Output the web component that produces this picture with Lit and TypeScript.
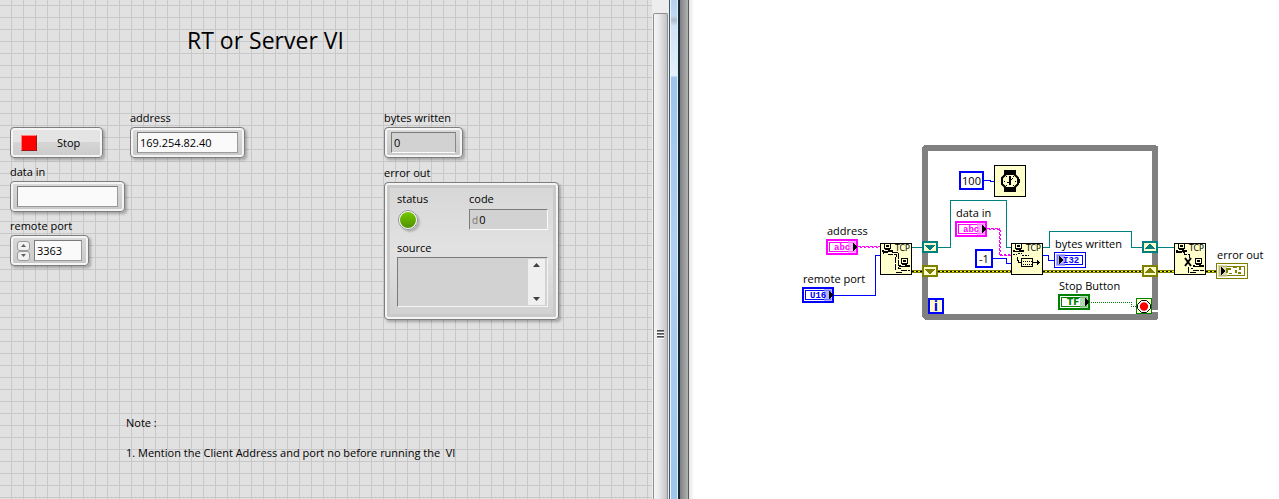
import { LitElement, html, svg, css } from "lit";
import { customElement } from "lit/decorators.js";

const BLUE = "#0000ff";
const PINK = "#ff00ff";
const TEAL = "#008080";
const OLIVE = "#808000";
const GREEN = "#008000";
const CREAM = "#ffffcc";

/* ---------- front panel ---------- */

@customElement("front-panel")
export class FrontPanel extends LitElement {
  static styles = css`
    :host {
      display: block;
      box-sizing: border-box;
      min-width: 0;
      overflow: hidden;
      padding: 24px 0 24px 10px;
      background-color: #e1e1e1;
      background-image: linear-gradient(to right, transparent 11px, #c8c8c8 11px),
        linear-gradient(to bottom, transparent 11px, #c8c8c8 11px);
      background-size: 12px 12px;
      background-position: 0 0, 0 -6px;
      color: #000;
    }
    h1 {
      margin: 0 0 0 177px;
      font-size: 23px;
      line-height: 32px;
      font-weight: 400;
      white-space: nowrap;
    }
    .columns {
      display: grid;
      grid-template-columns: 120px 254px 176px;
      align-items: start;
      margin-top: 53px;
    }
    .column { display: grid; justify-items: start; }
    .first { padding-top: 18px; }
    .label { display: block; line-height: 18px; white-space: nowrap; }
    .first .label { margin-top: 5px; }
    .frame {
      box-sizing: border-box;
      border: 1px solid #7e7e7e;
      border-radius: 4px;
      background: linear-gradient(#dadada, #c8c8c8);
      box-shadow: inset 0 0 0 2px #f4f4f4, 2px 2px 3px rgba(0, 0, 0, 0.28);
    }
    .box {
      display: flex;
      align-items: center;
      gap: 4px;
      width: 115px;
      height: 31px;
      padding: 0 6px;
    }
    .port, .written { width: 79px; }
    .field {
      box-sizing: border-box;
      flex: 1;
      min-width: 0;
      width: 100%;
      height: 21px;
      margin: 0;
      padding: 0 2px;
      border: 1px solid #7b7b7b;
      border-right-color: #fafafa;
      border-bottom-color: #fafafa;
      border-radius: 0;
      outline: none;
      background: #fafafa;
      font: inherit;
      color: #000;
    }
    .editable .field { border-right-color: #9a9a9a; border-bottom-color: #9a9a9a; }
    .field.gray { background: #d2d2d2; }
    .written .field { border-right-color: #8a8a8a; }
    .stop {
      display: flex;
      align-items: center;
      gap: 20px;
      width: 93px;
      height: 31px;
      padding: 0 10px;
      background: linear-gradient(#e4e4e4 50%, #d5d5d5 50%, #cbcbcb);
      font: inherit;
      color: #000;
    }
    .lamp {
      box-sizing: border-box;
      width: 16px;
      height: 16px;
      border: 1px solid #9c1414;
      border-top-color: #ff8080;
      border-left-color: #ff8080;
      background: #f00;
    }
    .spin { display: grid; width: 13px; height: 20px; }
    .spin button {
      display: grid;
      place-items: center;
      padding: 0;
      border: 1px solid #9b9b9b;
      border-radius: 3px;
      background: #f1f1f1;
    }
    .arrow { display: block; fill: #404040; }
    .spin .arrow { width: 5px; height: 3px; fill: #606060; }
    .cluster {
      display: grid;
      grid-template-columns: 72px 79px;
      width: 175px;
      height: 138px;
      padding: 7px 0 0 12px;
      align-content: start;
      background: linear-gradient(#d6d6d6, #e2e2e2 50%, #d0d0d0);
      box-shadow: inset 0 0 0 2px #f4f4f4, inset 0 0 0 5px #cacaca, 2px 2px 3px rgba(0, 0, 0, 0.28);
    }
    .error { line-height: 18px; margin-top: 6px; }
    .led {
      box-sizing: border-box;
      width: 20px;
      height: 20px;
      margin: 2px 0 0 1px;
      border: 2px solid #fff;
      border-radius: 50%;
      outline: 1px solid #8c8c8c;
      outline-offset: -1px;
      background: linear-gradient(#74c800, #4f9000);
      box-shadow: 2px 2px 2px rgba(0, 0, 0, 0.2);
    }
    .code { display: flex; align-items: center; margin-top: 1px; }
    .radix { font-size: 10px; color: #777; }
    .code input {
      flex: 1;
      min-width: 0;
      padding: 0 1px;
      border: 0;
      outline: none;
      background: none;
      font: inherit;
    }
    .source-label { grid-column: 1 / -1; margin-top: 9px; }
    .source {
      grid-column: 1 / -1;
      display: flex;
      box-sizing: border-box;
      height: 50px;
      padding: 1px 2px 1px 0;
      border: 1px solid #7b7b7b;
      border-right-color: #f4f4f4;
      border-bottom-color: #f4f4f4;
      background: #d2d2d2;
    }
    .source textarea {
      flex: 1;
      min-width: 0;
      border: 0;
      padding: 2px;
      resize: none;
      overflow: hidden;
      outline: none;
      background: none;
      font: inherit;
    }
    .bar {
      display: flex;
      flex-direction: column;
      justify-content: space-between;
      width: 17px;
      background: #efefef;
    }
    .bar button {
      display: grid;
      place-items: center;
      height: 12px;
      padding: 0;
      border: 0;
      background: none;
    }
    .notes { margin: 88px 0 0 116px; line-height: 30px; }
    .notes p { margin: 0; white-space: pre; }
  `;

  private arrow(up: boolean) {
    return html`<svg class="arrow" width="7" height="4" viewBox="0 0 7 4" aria-hidden="true">
      ${up ? svg`<path d="M3.5 0L7 4H0z"/>` : svg`<path d="M0 0H7L3.5 4z"/>`}
    </svg>`;
  }

  render() {
    return html`
      <h1>RT or Server VI</h1>
      <div class="columns">
        <div class="column first">
          <button class="frame stop"><span class="lamp"></span>Stop</button>
          <label class="label" for="data">data in</label>
          <div class="frame box editable"><input class="field" id="data" type="text" /></div>
          <label class="label" for="port">remote port</label>
          <div class="frame box port editable">
            <div class="spin">
              <button aria-label="Increase">${this.arrow(true)}</button>
              <button aria-label="Decrease">${this.arrow(false)}</button>
            </div>
            <input class="field" id="port" type="text" inputmode="numeric" value="3363" />
          </div>
        </div>
        <div class="column">
          <label class="label" for="address">address</label>
          <div class="frame box editable">
            <input class="field" id="address" type="text" value="169.254.82.40" />
          </div>
        </div>
        <div class="column">
          <label class="label" for="written">bytes written</label>
          <div class="frame box written">
            <input class="field gray" id="written" type="text" value="0" readonly />
          </div>
          <div class="error">error out</div>
          <div class="frame cluster">
            <span class="label">status</span>
            <label class="label" for="code">code</label>
            <span class="led" role="img" aria-label="No error"></span>
            <div class="field gray code">
              <span class="radix">d</span><input id="code" type="text" value="0" readonly />
            </div>
            <label class="label source-label" for="source">source</label>
            <div class="source">
              <textarea id="source" readonly></textarea>
              <div class="bar">
                <button aria-label="Scroll up">${this.arrow(true)}</button>
                <button aria-label="Scroll down">${this.arrow(false)}</button>
              </div>
            </div>
          </div>
        </div>
      </div>
      <div class="notes">
        <p>Note :</p>
        <p>1. Mention the Client Address and port no before running the  VI</p>
      </div>
    `;
  }
}

/* ---------- window edge with the vertical scroll bar ---------- */

@customElement("window-edge")
export class WindowEdge extends LitElement {
  static styles = css`
    :host { display: flex; }
    .track {
      display: flex;
      flex-direction: column;
      box-sizing: border-box;
      width: 17px;
      padding: 13px 1px 0;
      background: #ededed;
    }
    .thumb {
      flex: 1;
      display: grid;
      align-content: center;
      justify-items: center;
      gap: 1px;
      box-sizing: border-box;
      padding-top: 154px;
      border: 1px solid #8f8f8f;
      border-bottom: 0;
      border-radius: 2px 2px 0 0;
      background: linear-gradient(to right, #f6f6f6, #e8e8ea 40%, #c2c2c6);
    }
    .grip {
      width: 7px;
      height: 1px;
      border-bottom: 1px solid #8c8c8c;
      background: #4c4c4c;
      box-shadow: 0 1px #fff;
    }
    .glass {
      box-sizing: border-box;
      width: 9px;
      border: solid #3e5566;
      border-width: 0 0 0 1px;
      box-shadow: inset 1px 0 #e9f6ff, inset -1px 0 #d5f1ff;
      background: linear-gradient(#b5d0ee, #c2d8ef 16px, #aebccb 20px, #d0e2f5 26px, #e4effb 76px, #9fc5ec 77px, #b0cff0 50%, #9fc5ec);
    }
    .dark { width: 2px; background: #1c2a33; }
    .shade {
      box-sizing: border-box;
      width: 9px;
      border-right: 1px solid #5a5a5a;
      background: linear-gradient(to right, #7e8082, #b2b2b2);
    }
    .fade { width: 5px; background: linear-gradient(to right, #e4e4e4, #fff); }
  `;

  render() {
    return html`
      <div class="track">
        <div class="thumb"><i class="grip"></i><i class="grip"></i><i class="grip"></i></div>
      </div>
      <div class="glass"></div>
      <div class="dark"></div>
      <div class="shade"></div>
      <div class="fade"></div>
    `;
  }
}

/* ---------- block diagram ---------- */

@customElement("block-diagram")
export class BlockDiagram extends LitElement {
  static styles = css`
    :host { display: block; min-width: 0; overflow: hidden; background: #fff; }
    svg { display: block; width: 586px; height: 499px; shape-rendering: crispEdges; }
    text { fill: #000; white-space: pre; }
    .label { font-size: 11px; }
    .tcp { font: 8px "DejaVu Sans", sans-serif; }
    .mono { font: bold 9px "Liberation Mono", monospace; }
    .wide { font: bold 9px "DejaVu Sans", sans-serif; }
    .pink { fill: #ff00ff; }
    .blue { fill: #0000ff; }
    .green { fill: #008000; }
    .index { font-size: 14px; font-weight: 700; fill: #0000ff; }
    .wire { fill: none; stroke-width: 1; }
    .smooth { shape-rendering: geometricPrecision; }
  `;

  private wire(d: string, color: string, dash = "none") {
    return svg`<path class="wire" d=${d} stroke=${color} stroke-dasharray=${dash} />`;
  }

  private errorWire(x1: number, x2: number) {
    return svg`
      <rect x=${x1} y="270" width=${x2 - x1} height="3" fill=${OLIVE} />
      <path d="M${x1} 271.5H${x2}" stroke="#ffff00" />
      <path d="M${x1} 271.5H${x2}" stroke="#000" stroke-dasharray="2 2" />`;
  }

  private terminal(x: number, y: number, color: string, tint: string, text: string, cls: string, tx: number, control: boolean) {
    const edge = control ? 2 : 1;
    const ax = control ? x + 27 : x + 5;
    return svg`
      <rect x=${x} y=${y} width="32" height="16" fill=${color} />
      <rect x=${x + edge} y=${y + edge} width=${32 - 2 * edge} height=${16 - 2 * edge} fill="#fff" />
      <rect x=${x + 3.5} y=${y + 3.5} width="25" height="9" fill="#fff" stroke=${color} />
      <rect x=${control ? x + 22 : x + 2} y=${y + 2} width=${control ? 8 : 9} height="12" fill=${tint} fill-opacity="0.75" />
      <text class=${cls} x=${x + tx} y=${y + 11}>${text}</text>
      <path d="M${ax} ${y + 4}v8h1v-1h1v-1h1v-1h1v-2h-1v-1h-1v-1h-1v-1z" fill="#000" />`;
  }

  private constant(x: number, y: number, w: number, text: string) {
    return svg`
      <rect x=${x + 1} y=${y + 1} width=${w - 2} height="17" fill="#fff" stroke=${BLUE} stroke-width="2" />
      <text class="label" x=${x + w / 2} y=${y + 14} text-anchor="middle">${text}</text>`;
  }

  private register(x: number, y: number, color: string, up: boolean) {
    const d = up
      ? `M${x + 3} ${y + 8}h10v-1h-1v-1h-1v-1h-1v-1h-1v-1h-2v1h-1v1h-1v1h-1v1h-1z`
      : `M${x + 3} ${y + 4}h10v1h-1v1h-1v1h-1v1h-1v1h-2v-1h-1v-1h-1v-1h-1v-1h-1z`;
    return svg`
      <rect x=${x + 1} y=${y + 1} width="14" height="10" fill=${CREAM} stroke=${color} stroke-width="2" />
      <path d=${d} fill=${color} />`;
  }

  private computer(x: number, y: number) {
    return svg`
      <path d="M${x + 1} ${y}h7v6h-7zM${x + 2} ${y + 1}v4h5v-4z" fill="#000" fill-rule="evenodd" />
      <path d="M${x + 3} ${y + 2}h3v2h-3z" fill="#000" />
      <path d="M${x - 1} ${y + 7}h3v-1h5v1h3v2h-11zM${x + 1} ${y + 7}v1h4v-1z" fill="#000" fill-rule="evenodd" />`;
  }

  private node(x: number, y: number, label: string, body: unknown) {
    return svg`
      <rect x=${x + 0.5} y=${y + 0.5} width="31" height="31" fill=${CREAM} stroke="#000" />
      <text class="tcp" x=${x + 15} y=${y + 8}>${label}</text>
      ${body}`;
  }

  private label(x: number, y: number, text: string) {
    return svg`<text class="label" x=${x} y=${y}>${text}</text>`;
  }

  render() {
    return html`
      <svg viewBox="694 0 586 499" role="img" aria-label="TCP server block diagram">
        <path d="M924 145H1156V146H1158V310H1152V151H928V314H1157V320H925V319H924V318H923V317H922V147H923V146H924z" fill="#808080" />
        <path d="M1152 312H1158V319H1152z" fill="#808080" />

        ${this.errorWire(912, 922)} ${this.errorWire(938, 1011)} ${this.errorWire(1043, 1142)}
        ${this.errorWire(1158, 1174)} ${this.errorWire(1206, 1217)}

        ${this.wire("M912 247.5H922", TEAL)}
        ${this.wire("M938 247.5H950.5V200.5H1006.5V247.5H1011", TEAL)}
        ${this.wire("M1043 247.5H1049.5V231.5H1131.5V247.5H1142", TEAL)}
        ${this.wire("M1158 247.5H1174", TEAL)}
        ${this.wire("M834 295.5H875.5V255.5H880", BLUE)}
        ${this.wire("M984 180.5H990V181.5H994", BLUE)}
        ${this.wire("M993 258.5H1006.5V263.5H1011", BLUE)}
        ${this.wire("M1043 255.5H1048.5V260.5H1054", BLUE)}
        ${this.wire("M858 246.5H880", PINK, "3 1")}
        ${this.wire("M860 247.5H880", PINK, "2 2")}
        ${this.wire("M987 228.5H999.5V255.5H1011", PINK, "3 1")}
        ${this.wire("M989 229.5H1000.5V254.5H1011", PINK, "2 2")}
        ${this.wire("M1091 302.5H1131.5V306.5H1136", GREEN, "1 1")}

        ${this.register(922, 241, TEAL, false)} ${this.register(922, 265, OLIVE, false)}
        ${this.register(1142, 241, TEAL, true)} ${this.register(1142, 265, OLIVE, true)}

        ${this.label(827, 235, "address")}
        ${this.terminal(826, 239, PINK, "#ff99ff", "abc", "mono pink", 8, true)}
        ${this.label(803, 283, "remote port")}
        ${this.terminal(802, 287, BLUE, "#9999ff", "U16", "mono blue", 8, true)}
        ${this.label(956, 217, "data in")}
        ${this.terminal(955, 221, PINK, "#ff99ff", "abc", "mono pink", 8, true)}
        ${this.label(1055, 248, "bytes written")}
        ${this.terminal(1054, 252, BLUE, "#9999ff", "I32", "mono blue", 9, false)}
        ${this.label(1059, 290, "Stop Button")}
        ${this.terminal(1058, 294, GREEN, "#99cc99", "TF", "wide green", 9, true)}
        ${this.label(1217, 259, "error out")}
        ${this.terminal(1216, 263, OLIVE, "#cccc99", "", "mono", 8, false)}
        <path d="M1226 268h5v2h-3v3h-2zM1233 267h4v1h-4zM1239 267h2v3h-2zM1235 270h2v3h-2zM1238 272h3v2h-3zM1229 273h3v1h-3z" fill=${OLIVE} />

        ${this.constant(959, 171, 25, "100")} ${this.constant(975, 249, 18, "-1")}

        <rect x="929" y="299" width="14" height="14" fill=${CREAM} stroke=${BLUE} stroke-width="2" />
        <text class="index" x="936" y="311" text-anchor="middle">i</text>

        <rect x="994.5" y="165.5" width="31" height="31" fill=${CREAM} stroke="#000" />
        <path d="M1004 170h12v5h-12zM1004 187h12v5h-12z" fill="#000" />
        <path class="smooth" d="M1006 174h8l4 4v6l-4 4h-8l-4-4v-6z" fill=${CREAM} stroke="#000" stroke-width="2" />
        <path d="M1018 179h2v4h-2zM1006 176h1v1h-1zM1013 176h1v1h-1zM1006 185h1v1h-1zM1013 185h1v1h-1zM1004 181h1v1h-1zM1015 181h1v1h-1zM1009 176h2v9h-2zM1007 182h2v1h-2zM1011 179h1v1h-1zM1012 178h1v1h-1z" fill="#000" />

        ${this.node(880, 243, "TCP", svg`
          ${this.computer(883, 243)} ${this.computer(900, 258)}
          <path d="M883.5 254V252.5H888V254.5H896.5V257M895.5 257V270.5M895.5 272.5H902M892 252.5H898.5V268.5H901M901 270.5H910" fill="none" stroke="#000" stroke-dasharray="6 1" />`)}
        ${this.node(1011, 243, "TCP", svg`
          ${this.computer(1014, 243)}
          <path d="M1013 254.5H1017M1018 253.5H1022M1022 255.5H1029" fill="none" stroke="#000" stroke-dasharray="2 1" />
          <path d="M1017.5 257V260.5H1018.5V262.5H1021" fill="none" stroke="#000" />
          <rect x="1021.5" y="258.5" width="11" height="8" fill="none" stroke="#000" />
          <path d="M1023 261.5H1032M1023 264.5H1032" fill="none" stroke="#000" stroke-dasharray="1 1" />
          <path d="M1033 262h4v-2h1v1h1v1h1v1h-1v1h-1v1h-1v-2h-4z" fill="#000" />`)}
        ${this.node(1174, 243, "TCP", svg`
          ${this.computer(1177, 243)} ${this.computer(1194, 258)}
          <path d="M1176 252.5H1184V254.5H1189V258M1188.5 267V272.5H1196M1191 268.5H1193M1193 270.5H1204" fill="none" stroke="#000" stroke-dasharray="6 1" />
          <path class="smooth" d="M1185 258L1191 266M1191 258L1185 266" stroke="#000" stroke-width="2" />`)}

        <rect x="1136.5" y="298.5" width="15" height="15" fill=${CREAM} stroke=${GREEN} />
        <path class="smooth" d="M1141.5 300.5h5l4 4v4l-4 4h-5l-4-4v-4z" fill="#fff" stroke="#000" />
        <circle class="smooth" cx="1144" cy="306.5" r="4.2" fill="#f00" />
      </svg>
    `;
  }
}

@customElement("app-root")
export class AppRoot extends LitElement {
  static styles = css`
    :host {
      display: grid;
      grid-template-columns: minmax(0, 652px) auto minmax(0, 1fr);
      min-height: 100vh;
      font-family: "Open Sans", "Noto Sans", sans-serif;
      font-size: 11px;
    }
  `;

  render() {
    return html`
      <front-panel></front-panel>
      <window-edge></window-edge>
      <block-diagram></block-diagram>
    `;
  }
}
